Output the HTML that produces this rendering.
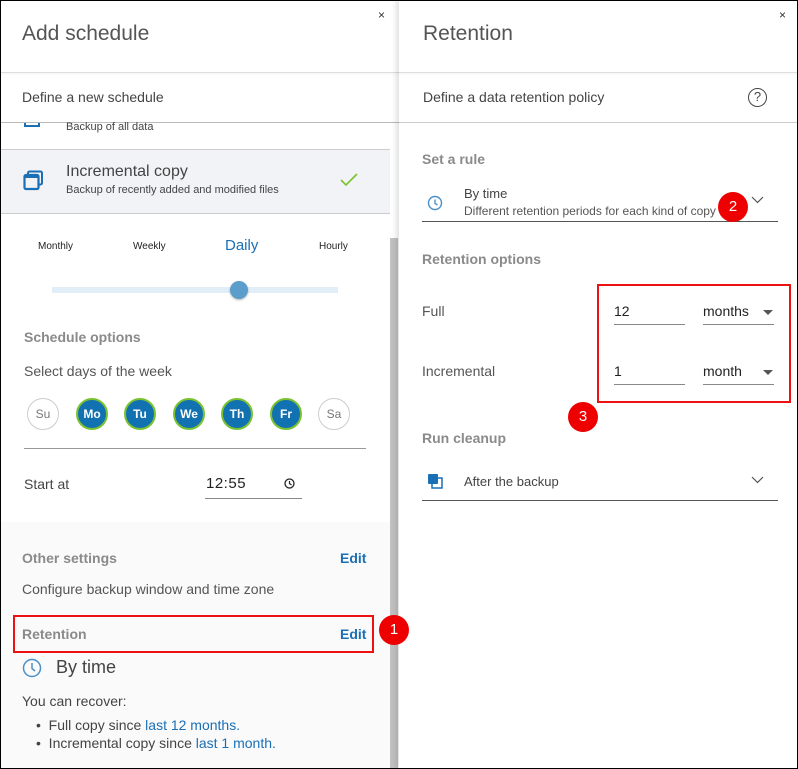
<!DOCTYPE html>
<html><head><meta charset="utf-8"><style>
*{margin:0;padding:0;box-sizing:border-box}
body{width:798px;height:769px;overflow:hidden;font-family:"Liberation Sans",sans-serif;background:#fff;position:relative;color:#444}
.a{position:absolute}
.frame{position:absolute;left:0;top:0;width:798px;height:769px;border:1px solid #000;z-index:50;pointer-events:none}
.day{position:absolute;top:398px;width:32px;height:32px;border-radius:50%;font-size:12px;text-align:center;line-height:28px;font-weight:bold;color:#fff;background:#1271b1;border:2px solid #7ac231}
.day.off{background:#fff;border:1px solid #ccc;color:#777;font-weight:normal;line-height:30px}
.gray{color:#8a8a8a;font-weight:bold;font-size:14px}
.blue{color:#1a6fb5}
.red{position:absolute;width:30px;height:30px;border-radius:50%;background:#e00;color:#fff;font-size:15px;text-align:center;line-height:30px;z-index:20}
</style></head><body>
<div class="frame"></div>
<!-- left panel -->
<div class="a" style="left:1px;top:0;width:398px;height:769px;background:#fff"></div>
<div class="a" style="left:22px;top:22px;font-size:21px;color:#555">Add schedule</div>
<div class="a" style="left:378px;top:8px;font-size:12px;color:#333">×</div>
<div class="a" style="left:1px;top:72px;width:398px;height:1px;background:#ddd;box-shadow:0 1px 2px rgba(0,0,0,.08)"></div>
<div class="a" style="left:22px;top:89px;font-size:14px;color:#444">Define a new schedule</div>
<div class="a" style="left:1px;top:122px;width:398px;height:1px;background:#bbb"></div>
<div class="a" style="left:24px;top:123px;width:16px;height:4px;border:2px solid #1a6fb5;border-top:none"></div>
<div class="a" style="left:66px;top:121px;font-size:11px;color:#444">Backup of all data</div>
<div class="a" style="left:1px;top:149px;width:389px;height:65px;background:#f2f3f6;border-top:1px solid #ccc;border-bottom:1px solid #ccc"></div>
<svg class="a" style="left:23px;top:170px" width="22" height="22" viewBox="0 0 22 22"><rect x="5" y="1.5" width="14" height="13" rx="1.5" fill="none" stroke="#1a6fb5" stroke-width="2"/><rect x="1.5" y="5" width="14" height="14" rx="1.5" fill="#f2f3f6" stroke="#1a6fb5" stroke-width="2.2"/><rect x="1.5" y="5" width="14" height="3" fill="#1a6fb5"/></svg>
<div class="a" style="left:66px;top:163px;font-size:16px;color:#444">Incremental copy</div>
<div class="a" style="left:66px;top:184px;font-size:11px;color:#444">Backup of recently added and modified files</div>
<svg class="a" style="left:340px;top:173px" width="18" height="14"><path d="M1 7 L6 12 L17 1" fill="none" stroke="#7ac231" stroke-width="1.6"/></svg>
<div class="a" style="left:390px;top:238px;width:8px;height:531px;background:#c1c1c1"></div>
<div class="a" style="left:38px;top:241px;font-size:10px;color:#222">Monthly</div>
<div class="a" style="left:133px;top:241px;font-size:10px;color:#222">Weekly</div>
<div class="a" style="left:225px;top:237px;font-size:15px" ><span class="blue">Daily</span></div>
<div class="a" style="left:319px;top:241px;font-size:10px;color:#222">Hourly</div>
<div class="a" style="left:52px;top:188px;width:286px;height:6px;background:#e2eef7;top:287px"></div>
<div class="a" style="left:230px;top:281px;width:18px;height:18px;border-radius:50%;background:#5b9ecb;box-shadow:0 1px 2px rgba(0,0,0,.3)"></div>
<div class="a gray" style="left:24px;top:329px">Schedule options</div>
<div class="a" style="left:24px;top:363px;font-size:14px;color:#555">Select days of the week</div>
<div class="day off" style="left:27px">Su</div>
<div class="day" style="left:76px">Mo</div>
<div class="day" style="left:124px">Tu</div>
<div class="day" style="left:173px">We</div>
<div class="day" style="left:221px">Th</div>
<div class="day" style="left:270px">Fr</div>
<div class="day off" style="left:318px">Sa</div>
<div class="a" style="left:24px;top:448px;width:342px;height:1px;background:#999"></div>
<div class="a" style="left:24px;top:476px;font-size:14px;color:#444">Start at</div>
<div class="a" style="left:206px;top:475px;font-size:15px;color:#222;letter-spacing:.5px">12:55</div>
<svg class="a" style="left:284px;top:478px" width="11" height="11"><circle cx="5.5" cy="5.5" r="4.5" fill="none" stroke="#222" stroke-width="1.3"/><path d="M5.5 3V5.5L7.5 7" fill="none" stroke="#222" stroke-width="1.2"/></svg>
<div class="a" style="left:205px;top:498px;width:97px;height:1px;background:#888"></div>
<div class="a" style="left:1px;top:522px;width:389px;height:247px;background:#fafafa"></div>
<div class="a gray" style="left:22px;top:550px">Other settings</div>
<div class="a blue" style="left:340px;top:550px;font-size:14px;font-weight:bold">Edit</div>
<div class="a" style="left:22px;top:581px;font-size:14px;color:#555">Configure backup window and time zone</div>
<div class="a" style="left:13px;top:615px;width:361px;height:38px;border:2px solid #e11"></div>
<div class="a gray" style="left:22px;top:626px">Retention</div>
<div class="a blue" style="left:340px;top:626px;font-size:14px;font-weight:bold">Edit</div>
<div class="red" style="left:379px;top:615px">1</div>
<svg class="a" style="left:22px;top:658px" width="20" height="20"><circle cx="10" cy="10" r="8.5" fill="none" stroke="#4a90c8" stroke-width="1.5"/><path d="M10 5V10.5L13 13" fill="none" stroke="#4a90c8" stroke-width="1.5"/></svg>
<div class="a" style="left:56px;top:657px;font-size:18px;color:#444">By time</div>
<div class="a" style="left:22px;top:693px;font-size:14px;color:#444">You can recover:</div>
<div class="a" style="left:36px;top:716px;font-size:14px;color:#444;line-height:18px">•&nbsp;&nbsp;Full copy since <span class="blue">last 12 months.</span><br>•&nbsp;&nbsp;Incremental copy since <span class="blue">last 1 month.</span></div>
<!-- right panel -->
<div class="a" style="left:399px;top:0;width:398px;height:769px;background:#fff;box-shadow:-3px 0 5px rgba(0,0,0,.12)"></div>
<div class="a" style="left:423px;top:22px;font-size:21px;color:#555">Retention</div>
<div class="a" style="left:779px;top:8px;font-size:12px;color:#333">×</div>
<div class="a" style="left:399px;top:72px;width:398px;height:1px;background:#ddd;box-shadow:0 1px 2px rgba(0,0,0,.08)"></div>
<div class="a" style="left:423px;top:89px;font-size:14px;color:#444">Define a data retention policy</div>
<div class="a" style="left:748px;top:88px;width:19px;height:19px;border:1.5px solid #444;border-radius:50%;font-size:13px;text-align:center;line-height:16px;color:#444">?</div>
<div class="a" style="left:399px;top:122px;width:398px;height:1px;background:#ccc"></div>
<div class="a gray" style="left:422px;top:151px">Set a rule</div>
<svg class="a" style="left:427px;top:195px" width="16" height="16"><circle cx="8" cy="8" r="6.5" fill="none" stroke="#4a90c8" stroke-width="1.4"/><path d="M8 4.5V8.5L10.5 10" fill="none" stroke="#4a90c8" stroke-width="1.4"/></svg>
<div class="a" style="left:464px;top:186px;font-size:13px;color:#444">By time</div>
<div class="a" style="left:464px;top:204px;font-size:12px;color:#555">Different retention periods for each kind of copy</div>
<svg class="a" style="left:751px;top:196px" width="13" height="8"><path d="M1 1L6.5 6.5L12 1" fill="none" stroke="#555" stroke-width="1.2"/></svg>
<div class="red" style="left:718px;top:192px">2</div>
<div class="a" style="left:422px;top:221px;width:356px;height:1px;background:#555"></div>
<div class="a gray" style="left:422px;top:251px">Retention options</div>
<div class="a" style="left:422px;top:303px;font-size:14px;color:#555">Full</div>
<div class="a" style="left:422px;top:363px;font-size:14px;color:#555">Incremental</div>
<div class="a" style="left:597px;top:284px;width:194px;height:119px;border:2px solid #e11"></div>
<div class="a" style="left:614px;top:303px;font-size:14px;color:#222">12</div>
<div class="a" style="left:614px;top:324px;width:71px;height:1px;background:#888"></div>
<div class="a" style="left:703px;top:303px;font-size:14px;color:#222">months</div>
<div class="a" style="left:703px;top:324px;width:71px;height:1px;background:#888"></div>
<div class="a" style="left:614px;top:363px;font-size:14px;color:#222">1</div>
<div class="a" style="left:614px;top:384px;width:71px;height:1px;background:#888"></div>
<div class="a" style="left:703px;top:363px;font-size:14px;color:#222">month</div>
<div class="a" style="left:703px;top:384px;width:71px;height:1px;background:#888"></div>
<svg class="a" style="left:763px;top:310px" width="10" height="5"><path d="M0 0H10L5 5Z" fill="#555"/></svg>
<svg class="a" style="left:763px;top:370px" width="10" height="5"><path d="M0 0H10L5 5Z" fill="#555"/></svg>
<div class="red" style="left:568px;top:402px">3</div>
<div class="a gray" style="left:422px;top:430px">Run cleanup</div>
<svg class="a" style="left:428px;top:474px" width="15" height="15"><rect x="4" y="4" width="10" height="10" fill="none" stroke="#1a6fb5" stroke-width="1.5"/><rect x="0" y="0" width="10" height="10" rx="1" fill="#1a6fb5"/></svg>
<div class="a" style="left:464px;top:474px;font-size:13px;color:#444">After the backup</div>
<svg class="a" style="left:751px;top:476px" width="13" height="8"><path d="M1 1L6.5 6.5L12 1" fill="none" stroke="#555" stroke-width="1.2"/></svg>
<div class="a" style="left:422px;top:500px;width:356px;height:1px;background:#555"></div>
</body></html>
